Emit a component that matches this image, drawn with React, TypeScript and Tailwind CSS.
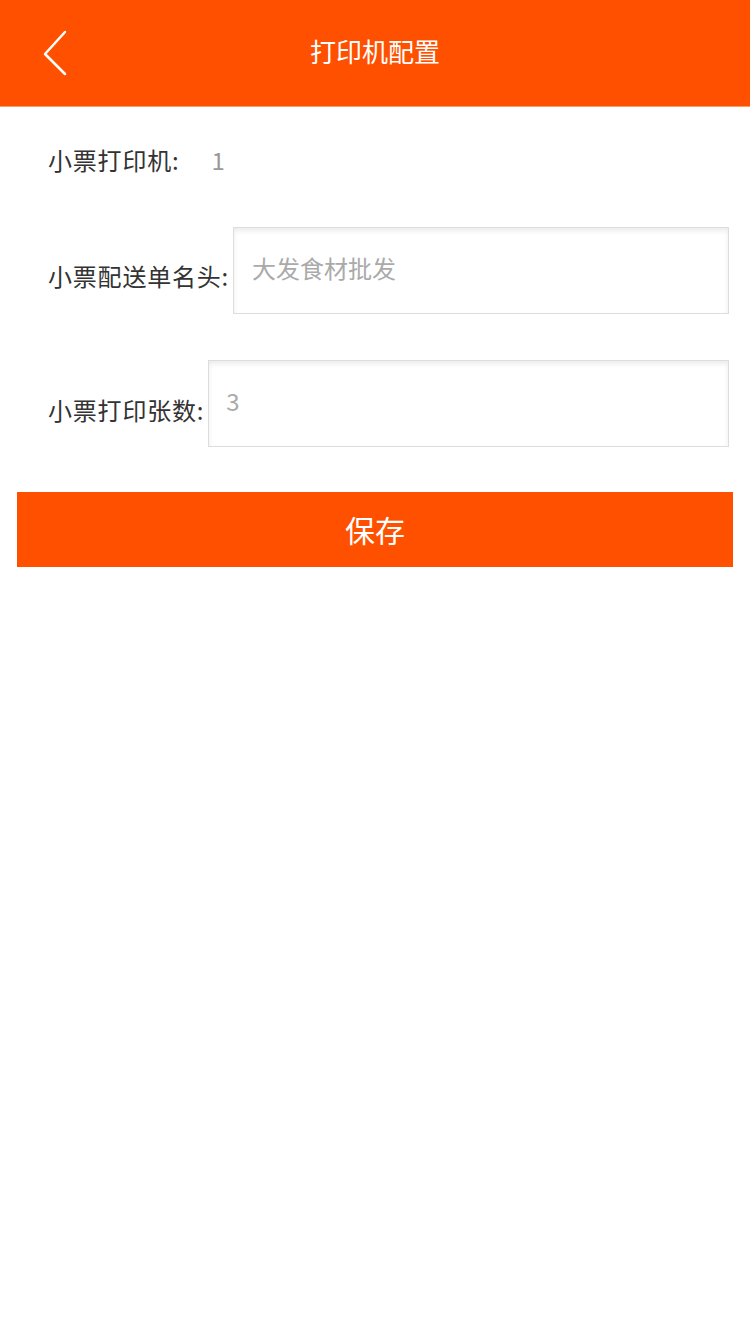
import { useState } from 'react'

export default function App() {
  const [header, setHeader] = useState('')
  const [copies, setCopies] = useState('')

  return (
    <div
      className="min-h-[1334px] w-[750px] bg-white"
      style={{ fontFamily: '"Noto Sans CJK SC", "Noto Sans", sans-serif' }}
    >
      <header className="flex h-[107px] items-center bg-[#ff5000] border-b border-[#ff9a6a]">
        <button className="flex h-full w-[110px] items-center pl-[40px]">
          <svg width="30" height="46" viewBox="0 0 30 46" fill="none">
            <path d="M25 2 L5 24 L25 44" stroke="white" strokeWidth="2.5" strokeLinecap="round" strokeLinejoin="round" />
          </svg>
        </button>
        <h1 className="flex-1 pb-[6px] text-center text-[26px] text-white">打印机配置</h1>
        <div className="w-[110px]" />
      </header>

      <div className="px-[17px] pt-[33px]">
        <div className="flex h-[40px] items-center pl-[31px] text-[24px] text-[#333]">
          <span className="tracking-[0.8px]">小票打印机:</span>
          <span className="ml-[32px] text-[#999]">1</span>
        </div>

        <div className="mt-[47px] flex items-center pl-[31px] pr-[4px]">
          <span className="pt-[10px] text-[24px] tracking-[0.8px] text-[#333]">小票配送单名头:</span>
          <input
            value={header}
            onChange={(e) => setHeader(e.target.value)}
            placeholder="大发食材批发"
            className="ml-[4px] h-[87px] flex-1 border border-[#ddd] pb-[6px] pl-[18px] text-[24px] text-[#333] shadow-[inset_0_3px_5px_rgba(0,0,0,0.08)] outline-none placeholder:text-[#aaa]"
          />
        </div>

        <div className="mt-[46px] flex items-center pl-[31px] pr-[4px]">
          <span className="pt-[12px] text-[24px] tracking-[0.8px] text-[#333]">小票打印张数:</span>
          <input
            value={copies}
            onChange={(e) => setCopies(e.target.value)}
            placeholder="3"
            className="ml-[4px] h-[87px] flex-1 border border-[#ddd] pb-[6px] pl-[17px] text-[24px] text-[#333] shadow-[inset_0_3px_5px_rgba(0,0,0,0.08)] outline-none placeholder:text-[#aaa]"
          />
        </div>

        <button className="mt-[45px] flex h-[75px] w-full items-center justify-center bg-[#ff5000] text-[30px] text-white">
          保存
        </button>
      </div>
    </div>
  )
}
